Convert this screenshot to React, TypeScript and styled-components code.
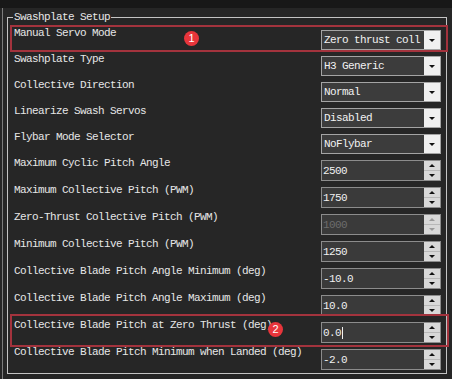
import styled, { createGlobalStyle } from "styled-components";

type Field = {
  label: string;
  kind: "combo" | "spin";
  value: string;
  disabled?: boolean;
  cursor?: boolean;
  mark?: { n: number; top: number; bottom: number; right: number; badgeLeft: number; badgeTop: number };
};

const fields: Field[] = [
  {
    label: "Manual Servo Mode",
    kind: "combo",
    value: "Zero thrust coll",
    mark: { n: 1, top: 5, bottom: 2, right: 7, badgeLeft: 170, badgeTop: 1 },
  },
  { label: "Swashplate Type", kind: "combo", value: "H3 Generic" },
  { label: "Collective Direction", kind: "combo", value: "Normal" },
  { label: "Linearize Swash Servos", kind: "combo", value: "Disabled" },
  { label: "Flybar Mode Selector", kind: "combo", value: "NoFlybar" },
  { label: "Maximum Cyclic Pitch Angle", kind: "spin", value: "2500" },
  { label: "Maximum Collective Pitch (PWM)", kind: "spin", value: "1750" },
  { label: "Zero-Thrust Collective Pitch (PWM)", kind: "spin", value: "1000", disabled: true },
  { label: "Minimum Collective Pitch (PWM)", kind: "spin", value: "1250" },
  { label: "Collective Blade Pitch Angle Minimum (deg)", kind: "spin", value: "-10.0" },
  { label: "Collective Blade Pitch Angle Maximum (deg)", kind: "spin", value: "10.0" },
  {
    label: "Collective Blade Pitch at Zero Thrust (deg)",
    kind: "spin",
    value: "0.0",
    cursor: true,
    mark: { n: 2, top: 8, bottom: 4, right: 8, badgeLeft: 254, badgeTop: 0 },
  },
  { label: "Collective Blade Pitch Minimum when Landed (deg)", kind: "spin", value: "-2.0" },
];

const App = () => {
  return (
    <>
      <GlobalStyle />
      <Page>
        <TopStrip />
        <Body>
          <Pane>
            <GroupBox>
              <Title>Swashplate Setup</Title>
              <Rows>
                {fields.map((f) => (
                  <Row key={f.label} $tall={f.kind === "spin"}>
                    <Label>{f.label}</Label>
                    {f.kind === "combo" ? (
                      <Combo>
                        <ComboText>{f.value}</ComboText>
                        <DropButton>
                          <Arrow $dir="down" />
                        </DropButton>
                      </Combo>
                    ) : (
                      <Spin>
                        <SpinText $disabled={f.disabled}>
                          {f.value}
                          {f.cursor && <Caret />}
                        </SpinText>
                        <SpinButtons>
                          <SpinHalf>
                            <Arrow $dir="up" $disabled={f.disabled} />
                          </SpinHalf>
                          <SpinHalf>
                            <Arrow $dir="down" $disabled={f.disabled} />
                          </SpinHalf>
                        </SpinButtons>
                      </Spin>
                    )}
                    {f.mark && (
                      <>
                        <Highlight $top={f.mark.top} $bottom={f.mark.bottom} $right={f.mark.right} />
                        <Badge style={{ left: f.mark.badgeLeft, top: f.mark.badgeTop }}>{f.mark.n}</Badge>
                      </>
                    )}
                  </Row>
                ))}
              </Rows>
            </GroupBox>
          </Pane>
        </Body>
      </Page>
    </>
  );
};

export default App;

const GlobalStyle = createGlobalStyle`
  body {
    margin: 0;
    background: #262626;
  }
`;

const Page = styled.div`
  width: 452px;
  height: 379px;
  background: #262626;
  overflow: hidden;
  font-family: "Liberation Mono", "Courier New", monospace;
  font-size: 11px;
  letter-spacing: -0.6px;
  color: #e6e6e6;
`;

const TopStrip = styled.div`
  height: 8px;
  background: #181818;
`;

const Body = styled.div`
  display: flex;
  height: 371px;
  padding-left: 2px;
`;

const Pane = styled.div`
  flex: 1;
  border-left: 1px solid #7c7c7c;
  padding-left: 4px;
`;

const GroupBox = styled.fieldset`
  box-sizing: border-box;
  width: 440px;
  height: 363px;
  margin: 3px 0 0 0;
  padding: 7px 5px 0 6px;
  border: 1px solid #c4c4c4;
  min-width: 0;
`;

const Title = styled.legend`
  padding: 0 1px;
  margin-left: -1px;
  line-height: 12px;
  color: #e8e8e8;
`;

const Rows = styled.div`
  display: flex;
  flex-direction: column;
  gap: 6px;
`;

const Row = styled.div<{ $tall: boolean }>`
  position: relative;
  display: grid;
  grid-template-columns: 1fr 120px;
  height: ${(p) => (p.$tall ? 21 : 20)}px;
`;

const Label = styled.div`
  line-height: 14px;
  margin-top: -4px;
  white-space: nowrap;
`;

const Combo = styled.div`
  box-sizing: border-box;
  display: flex;
  height: 20px;
  border: 1px solid #a4a4a4;
  background: #3c3c3c;
`;

const ComboText = styled.div`
  flex: 1;
  white-space: nowrap;
  padding-left: 2px;
  line-height: 18px;
  color: #f2f2f2;
`;

const DropButton = styled.div`
  width: 16px;
  display: flex;
  align-items: center;
  justify-content: center;
  background: #f0f0f0;
`;

const Arrow = styled.span<{ $dir: "up" | "down"; $disabled?: boolean }>`
  width: 0;
  height: 0;
  border-left: 3px solid transparent;
  border-right: 3px solid transparent;
  ${(p) =>
    p.$dir === "down"
      ? `border-top: 3px solid ${p.$disabled ? "#9a9a9a" : "#111"};`
      : `border-bottom: 3px solid ${p.$disabled ? "#9a9a9a" : "#111"};`}
`;

const Spin = styled.div`
  box-sizing: border-box;
  display: flex;
  height: 21px;
  border: 1px solid #8c8c8c;
  background: #3a3a3a;
`;

const SpinText = styled.div<{ $disabled?: boolean }>`
  flex: 1;
  display: flex;
  align-items: center;
  padding-left: 1px;
  color: ${(p) => (p.$disabled ? "#6c6c6c" : "#f0f0f0")};
`;

const Caret = styled.span`
  width: 1px;
  height: 12px;
  margin-left: 1px;
  background: #f0f0f0;
`;

const SpinButtons = styled.div`
  width: 16px;
  display: flex;
  flex-direction: column;
  gap: 1px;
  background: #b8b8b8;
`;

const SpinHalf = styled.div`
  flex: 1;
  display: flex;
  align-items: center;
  justify-content: center;
  background: #d8d8d8;
`;

const Highlight = styled.div<{ $top: number; $bottom: number; $right: number }>`
  position: absolute;
  top: ${(p) => -p.$top}px;
  bottom: ${(p) => -p.$bottom}px;
  left: -4px;
  right: ${(p) => -p.$right}px;
  border: 2px solid #a3333d;
  pointer-events: none;
`;

const Badge = styled.div`
  position: absolute;
  width: 15px;
  height: 15px;
  border-radius: 50%;
  background: #e8353b;
  color: #fff;
  font-family: "Liberation Sans", Arial, sans-serif;
  font-size: 11px;
  letter-spacing: 0;
  line-height: 15px;
  text-align: center;
`;
